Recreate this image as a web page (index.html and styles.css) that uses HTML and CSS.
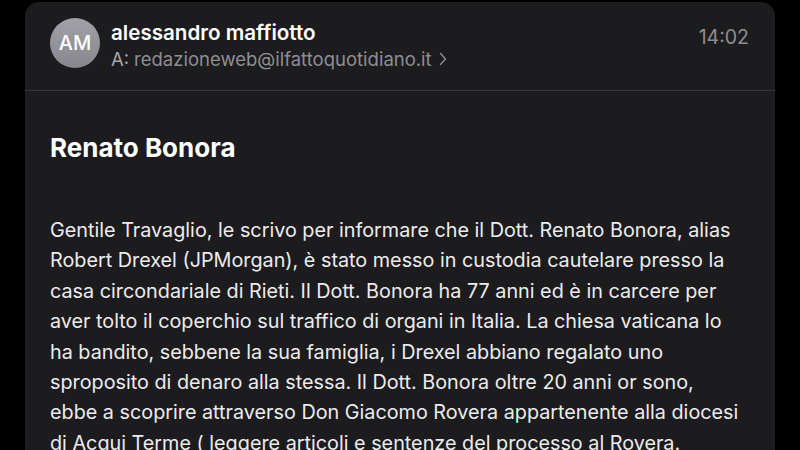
FILE: index.html
```html
<!DOCTYPE html>
<html lang="it">
<head>
<meta charset="utf-8">
<title>Mail</title>
<link rel="stylesheet" href="styles.css">
</head>
<body>
<div class="card">
  <header class="head">
    <div class="avatar">AM</div>
    <div class="meta">
      <div class="name">alessandro maffiotto</div>
      <div class="to"><span class="to-label">A:</span> <span class="addr">redazioneweb@ilfattoquotidiano.it</span><svg class="chev" width="8" height="14" viewBox="0 0 8 14"><path d="M1.5 1.5 L6.5 7 L1.5 12.5" fill="none" stroke="#8e8e93" stroke-width="1.4" stroke-linecap="round" stroke-linejoin="round"/></svg></div>
    </div>
    <div class="time">14:02</div>
  </header>
  <main class="content">
    <h1 class="subject">Renato Bonora</h1>
    <p class="body">Gentile Travaglio, le scrivo per informare che il Dott. Renato Bonora, alias<br>Robert Drexel (JPMorgan), è stato messo in custodia cautelare presso la<br>casa circondariale di Rieti. Il Dott. Bonora ha 77 anni ed è in carcere per<br>aver tolto il coperchio sul traffico di organi in Italia. La chiesa vaticana lo<br>ha bandito, sebbene la sua famiglia, i Drexel abbiano regalato uno<br>sproposito di denaro alla stessa. Il Dott. Bonora oltre 20 anni or sono,<br>ebbe a scoprire attraverso Don Giacomo Rovera appartenente alla diocesi<br>di Acqui Terme ( leggere articoli e sentenze del processo al Rovera.</p>
  </main>
</div>
</body>
</html>
```
FILE: styles.css
```css
html, body {
  margin: 0;
  padding: 0;
  background: #000;
  height: 100%;
  overflow: hidden;
}
body {
  font-family: Inter, "Noto Sans", sans-serif;
  color: #fff;
}
.card {
  margin: 2px 25px 0 25px;
  background: #1c1c1e;
  border-radius: 14px 14px 0 0;
  height: 460px;
}
.head {
  display: flex;
  align-items: flex-start;
  padding: 16px 26px 0 25px;
  height: 72px;
  border-bottom: 1px solid #38383a;
}
.avatar {
  width: 50px;
  height: 50px;
  border-radius: 50%;
  background: linear-gradient(#a1a1a7, #86868c);
  color: #fff;
  font-size: 20px;
  font-weight: 500;
  display: flex;
  align-items: center;
  justify-content: center;
  flex: none;
}
.meta {
  margin-left: 11px;
  flex: 1;
}
.name {
  font-size: 20.6px;
  font-weight: 600;
  line-height: 24px;
  margin-top: 3px;
}
.to {
  font-size: 18.5px;
  line-height: 22px;
  color: #8e8e93;
  margin-top: 3px;
  display: flex;
  align-items: center;
}
.to-label {
  color: #a5a5aa;
  margin-right: 5px;
}
.chev {
  margin-left: 7px;
}
.time {
  font-size: 19.5px;
  color: #8e8e93;
  margin-top: 7px;
}
.content {
  padding: 40px 0 0 25px;
}
.subject {
  margin: 0;
  font-size: 26px;
  font-weight: 700;
  line-height: 34px;
}
.body {
  margin: 50px 0 0 0;
  font-size: 19.8px;
  line-height: 30.4px;
  color: #ececee;
  white-space: nowrap;
}
```
